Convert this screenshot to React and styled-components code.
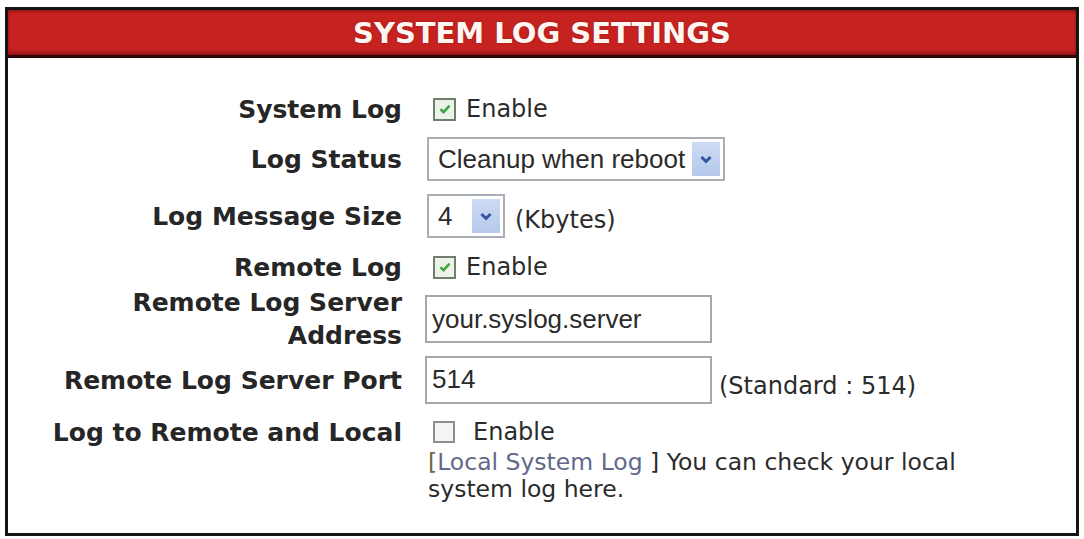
import React from 'react';
import styled, { createGlobalStyle } from 'styled-components';

const GlobalStyle = createGlobalStyle`
  html, body {
    margin: 0;
    padding: 0;
    background: #fff;
  }
  body {
    font-family: "DejaVu Sans", Verdana, sans-serif;
    color: #2b2b2b;
  }
`;

const Page = styled.div`
  padding: 7px 5px 0 5px;
`;

const Frame = styled.div`
  width: 1068px;
  height: 523px;
  border: 3px solid #151515;
  display: flex;
  flex-direction: column;
`;

const Header = styled.div`
  height: 45px;
  background: #c62220;
  border-bottom: 3px solid #2a0807;
  box-shadow: inset 0 -3px 3px rgba(60, 0, 0, 0.35), inset 0 2px 2px rgba(60, 0, 0, 0.3);
  display: flex;
  align-items: center;
  justify-content: center;
`;

const Title = styled.h1`
  margin: 0;
  font-family: "DejaVu Sans", Verdana, sans-serif;
  font-size: 29px;
  font-weight: bold;
  color: #fff6f2;
  text-shadow: 0 0 2px rgba(120, 20, 20, 0.6);
`;

const Form = styled.div`
  display: grid;
  grid-template-columns: 394px 1fr;
  column-gap: 23px;
  padding-top: 26px;
`;

const Label = styled.div`
  height: ${({ $h }) => $h}px;
  display: flex;
  align-items: center;
  justify-content: flex-end;
  text-align: right;
  font-size: 25px;
  font-weight: bold;
  line-height: 33px;
  color: #262626;
  white-space: nowrap;
`;

const Value = styled.div`
  height: ${({ $h }) => $h}px;
  display: flex;
  align-items: center;
  gap: ${({ $gap }) => $gap || 10}px;
  font-size: 24px;
`;

const Check = styled.span`
  box-sizing: border-box;
  width: ${({ $size }) => $size}px;
  height: ${({ $size }) => $size}px;
  margin-left: 8px;
  border: 2px solid ${({ $checked }) => ($checked ? '#6f7f6c' : '#8d8d8d')};
  background: ${({ $checked }) => ($checked ? '#eef3ea' : '#f4f4f4')};
  display: inline-flex;
  align-items: center;
  justify-content: center;
`;

const Text = styled.span`
  color: #2b2b2b;
  margin-top: ${({ $drop }) => $drop || 0}px;
`;

const SelectBox = styled.div`
  box-sizing: border-box;
  width: ${({ $w }) => $w}px;
  height: 44px;
  margin-left: 2px;
  border: 2px solid #a9aeb5;
  background: #fff;
  display: flex;
  align-items: center;
  padding: 3px;
`;

const SelectText = styled.span`
  flex: 1;
  padding-left: 6px;
  font-family: "Liberation Sans", Arial, sans-serif;
  font-size: 26px;
  color: #2b2b2b;
`;

const Arrow = styled.span`
  width: 28px;
  align-self: stretch;
  background: linear-gradient(#cddbf4, #b5c9ec);
  display: flex;
  align-items: center;
  justify-content: center;
`;

const Input = styled.div`
  box-sizing: border-box;
  width: ${({ $w }) => $w}px;
  height: 48px;
  border: 2px solid #a8a8a8;
  background: #fff;
  padding: 0 0 0 5px;
  display: flex;
  align-items: ${({ $top }) => ($top ? 'flex-start' : 'center')};
  padding-top: ${({ $top }) => ($top ? 6 : 0)}px;
  font-family: "Liberation Sans", Arial, sans-serif;
  font-size: 26px;
  color: #2b2b2b;
`;

const Note = styled.div`
  grid-column: 2;
  margin: -7px 0 0 3px;
  font-size: 23.5px;
  line-height: 27px;
  color: #2b2b2b;
`;

const NoteLine = styled.div`
  display: flex;
  white-space: pre;
`;

const Bracket = styled.span`
  color: #6b6b3a;
`;

const LinkText = styled.a`
  color: #62688a;
  text-decoration: none;
`;

const Tick = () => (
  <svg width="14" height="14" viewBox="0 0 14 14">
    <path d="M2.5 7.2 L5.6 10.2 L11.5 3.6" fill="none" stroke="#3fa63f" strokeWidth="2.6" />
  </svg>
);

const Chevron = () => (
  <svg width="14" height="11" viewBox="0 0 14 11">
    <path d="M2.5 3 L7 7.5 L11.5 3" fill="none" stroke="#34549e" strokeWidth="3" />
  </svg>
);

const App = () => (
  <Page>
    <GlobalStyle />
    <Frame>
      <Header>
        <Title>SYSTEM LOG SETTINGS</Title>
      </Header>
      <Form>
        <Label $h={50}>System Log</Label>
        <Value $h={50}>
          <Check $size={23} $checked>
            <Tick />
          </Check>
          <Text>Enable</Text>
        </Value>

        <Label $h={50}>Log Status</Label>
        <Value $h={50}>
          <SelectBox $w={298}>
            <SelectText>Cleanup when reboot</SelectText>
            <Arrow>
              <Chevron />
            </Arrow>
          </SelectBox>
        </Value>

        <Label $h={64}>Log Message Size</Label>
        <Value $h={64}>
          <SelectBox $w={78}>
            <SelectText>4</SelectText>
            <Arrow>
              <Chevron />
            </Arrow>
          </SelectBox>
          <Text $drop={8}>(Kbytes)</Text>
        </Value>

        <Label $h={38}>Remote Log</Label>
        <Value $h={38}>
          <Check $size={23} $checked>
            <Tick />
          </Check>
          <Text>Enable</Text>
        </Value>

        <Label $h={66}>
          Remote Log Server
          <br />
          Address
        </Label>
        <Value $h={66}>
          <Input $w={287}>your.syslog.server</Input>
        </Value>

        <Label $h={56}>Remote Log Server Port</Label>
        <Value $h={56} $gap={7}>
          <Input $w={287} $top>514</Input>
          <Text $drop={12}>(Standard : 514)</Text>
        </Value>

        <Label $h={48}>Log to Remote and Local</Label>
        <Value $h={48} $gap={18}>
          <Check $size={22}></Check>
          <Text>Enable</Text>
        </Value>

        <Note>
          <NoteLine>
            <Bracket>[</Bracket>
            <LinkText href="#">Local System Log</LinkText>
            <Text> ] You can check your local</Text>
          </NoteLine>
          <NoteLine>
            <Text>system log here.</Text>
          </NoteLine>
        </Note>
      </Form>
    </Frame>
  </Page>
);

export default App;
